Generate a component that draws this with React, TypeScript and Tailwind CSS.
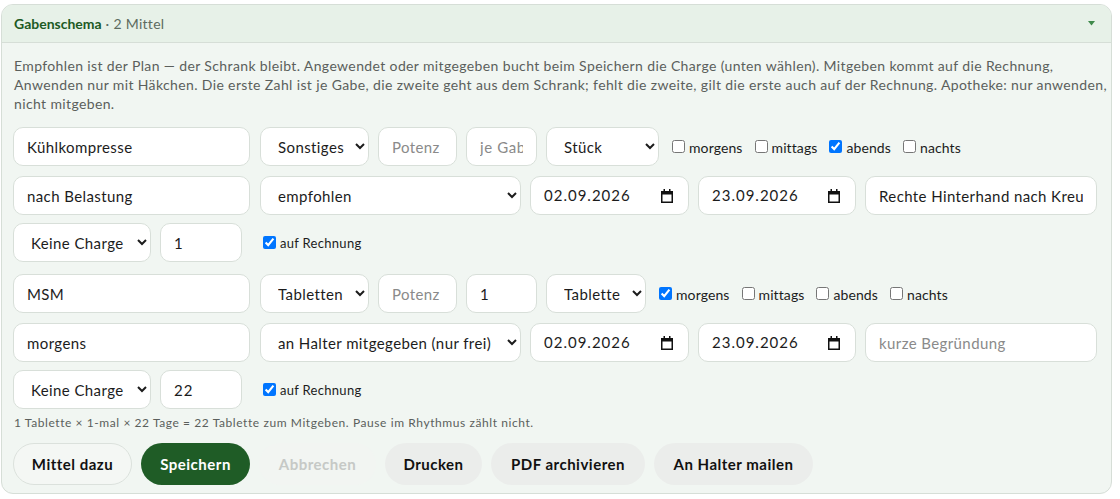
import React from "react";

const F = { fontFamily: "Lato, 'Noto Sans', sans-serif" };

function Cal() {
  return (
    <svg width="12" height="14" viewBox="0 0 12 14" className="shrink-0">
      <rect x="0.75" y="2.75" width="10.5" height="10.5" fill="none" stroke="#111" strokeWidth="1.5" />
      <rect x="0" y="2" width="12" height="3.5" fill="#111" />
      <rect x="2.5" y="0" width="1.5" height="3" fill="#111" />
      <rect x="8" y="0" width="1.5" height="3" fill="#111" />
    </svg>
  );
}

const inputCls =
  "h-[39px] rounded-[10px] border border-[#d8dfd9] bg-white px-[13px] text-[15px] tracking-[0.4px] text-[#1c1c1c] placeholder:text-[#8a8a8a] outline-none";
const numCls =
  "h-[39px] rounded-[10px] border border-[#d8dfd9] bg-white px-[13px] text-[15px] tracking-[1px] text-[#1c1c1c] placeholder:text-[#8a8a8a] placeholder:tracking-[0.6px] outline-none";
const selectCls =
  "h-[39px] rounded-[10px] border border-[#d8dfd9] bg-white pl-[13px] pr-[3px] text-[15px] tracking-[0.4px] text-[#1c1c1c] outline-none";

function DateBox({ value, w }: { value: string; w: string }) {
  return (
    <div className={`${w} h-[39px] rounded-[10px] border border-[#d8dfd9] bg-white pl-[13px] pr-[15px] flex items-center justify-between text-[15px] text-[#1c1c1c]`}>
      <span className="tracking-[1px]">{value}</span>
      <Cal />
    </div>
  );
}

function Check({ label, checked, small }: { label: string; checked?: boolean; small?: boolean }) {
  return (
    <label className="flex items-center gap-[4px]">
      <input type="checkbox" defaultChecked={checked} className="m-0 w-[13px] h-[13px]" />
      <span
        className={
          small
            ? "text-[13px] tracking-[0.3px] text-[#1c1c1c] mt-[2px]"
            : "text-[14px] tracking-[0.1px] text-[#1c1c1c] mt-[1px]"
        }
      >
        {label}
      </span>
    </label>
  );
}

function Med({
  name,
  form,
  dose,
  unit,
  unitW,
  checks,
  when,
  mode,
  from,
  to,
  reason,
  qty,
}: {
  name: string;
  form: string;
  dose: string;
  unit: string;
  unitW: string;
  checks: boolean[];
  when: string;
  mode: string;
  from: string;
  to: string;
  reason: string;
  qty: string;
}) {
  const labels = ["morgens", "mittags", "abends", "nachts"];
  return (
    <div>
      <div className="flex items-center">
        <input className={`${inputCls} w-[237px]`} defaultValue={name} />
        <select className={`${selectCls} w-[109px] ml-[10px]`} defaultValue={form}>
          <option>{form}</option>
        </select>
        <input className={`${inputCls} w-[79px] ml-[9px]`} placeholder="Potenz" />
        <input className={`${numCls} w-[71px] ml-[9px]`} placeholder="je Gabe" defaultValue={dose} />
        <select className={`${selectCls} ${unitW} ml-[9px]`} defaultValue={unit}>
          <option>{unit}</option>
        </select>
        <div className="flex items-center gap-[12px] ml-[13px]">
          {labels.map((l, i) => (
            <Check key={l} label={l} checked={checks[i]} />
          ))}
        </div>
      </div>
      <div className="flex items-center mt-[10px]">
        <input className={`${inputCls} w-[237px]`} defaultValue={when} />
        <select className={`${selectCls} w-[261px] ml-[10px]`} defaultValue={mode}>
          <option>{mode}</option>
        </select>
        <div className="ml-[9px]">
          <DateBox value={from} w="w-[159px]" />
        </div>
        <div className="ml-[9px]">
          <DateBox value={to} w="w-[158px]" />
        </div>
        <input
          className={`${inputCls} w-[232px] ml-[9px]`}
          placeholder="kurze Begründung"
          defaultValue={reason}
        />
      </div>
      <div className="flex items-center mt-[8px]">
        <select className={`${selectCls} w-[138px]`} defaultValue="Keine Charge">
          <option>Keine Charge</option>
        </select>
        <input className={`${numCls} w-[82px] ml-[9px]`} defaultValue={qty} />
        <div className="ml-[21px]">
          <Check label="auf Rechnung" checked small />
        </div>
      </div>
    </div>
  );
}

const btn = "h-[42px] rounded-full text-[15px] font-bold tracking-[0.5px]";

export default function App() {
  return (
    <div className="min-h-[499px] bg-white pt-[4px] pl-[1px]" style={F}>
      <div className="w-[1111px] rounded-[12px] border border-[#d6ded7] bg-[#f1f6f2] overflow-hidden">
        <div className="h-[38px] flex items-center justify-between pl-[12px] pr-[16px] bg-[#e7f1e8] border-b border-[#d6ded7]">
          <div className="text-[14px]">
            <span className="font-bold text-[#1d5a24]">Gabenschema</span>
            <span className="text-[#5d6b60] tracking-[0.3px]"> · 2 Mittel</span>
          </div>
          <svg width="7" height="5" viewBox="0 0 7 5">
            <path d="M0 0 H7 L3.5 4.5 Z" fill="#3f8a4b" />
          </svg>
        </div>
        <div className="px-[11px] pt-[13px] pb-[8px]">
          <div className="text-[14px] leading-[19px] tracking-[0.37px] text-[#5b5f5c] pl-[1px]">
            <p className="whitespace-nowrap">
              Empfohlen ist der Plan — der Schrank bleibt. Angewendet oder mitgegeben bucht beim Speichern die Charge (unten wählen). Mitgeben kommt auf die Rechnung,
            </p>
            <p className="whitespace-nowrap">
              Anwenden nur mit Häkchen. Die erste Zahl ist je Gabe, die zweite geht aus dem Schrank; fehlt die zweite, gilt die erste auch auf der Rechnung. Apotheke: nur anwenden,
            </p>
            <p className="whitespace-nowrap">nicht mitgeben.</p>
          </div>
          <div className="mt-[14px]">
            <Med
              name="Kühlkompresse"
              form="Sonstiges"
              dose=""
              unit="Stück"
              unitW="w-[113px]"
              checks={[false, false, true, false]}
              when="nach Belastung"
              mode="empfohlen"
              from="02.09.2026"
              to="23.09.2026"
              reason="Rechte Hinterhand nach Kreuzverschlag"
              qty="1"
            />
          </div>
          <div className="mt-[12px]">
            <Med
              name="MSM"
              form="Tabletten"
              dose="1"
              unit="Tablette"
              unitW="w-[100px]"
              checks={[true, false, false, false]}
              when="morgens"
              mode="an Halter mitgegeben (nur frei)"
              from="02.09.2026"
              to="23.09.2026"
              reason=""
              qty="22"
            />
          </div>
          <p className="mt-[6px] text-[12px] leading-[16px] tracking-[0.58px] text-[#5b5f5c] pl-[1px] whitespace-nowrap">
            1 Tablette × 1-mal × 22 Tage = 22 Tablette zum Mitgeben. Pause im Rhythmus zählt nicht.
          </p>
          <div className="mt-[12px] flex items-center gap-[9px]">
            <button className={`${btn} w-[119px] border border-[#dbe1dc] bg-[#f4f7f4] text-[#111]`}>
              Mittel dazu
            </button>
            <button className={`${btn} w-[109px] bg-[#1f5c26] text-white`}>Speichern</button>
            <button className={`${btn} w-[117px] bg-[#f2f5f2] text-[#c6c9c6]`}>Abbrechen</button>
            <button className={`${btn} w-[97px] bg-[#ebedeb] text-[#111]`}>Drucken</button>
            <button className={`${btn} w-[154px] bg-[#ebedeb] text-[#111]`}>PDF archivieren</button>
            <button className={`${btn} w-[159px] bg-[#ebedeb] text-[#111]`}>An Halter mailen</button>
          </div>
        </div>
      </div>
    </div>
  );
}
